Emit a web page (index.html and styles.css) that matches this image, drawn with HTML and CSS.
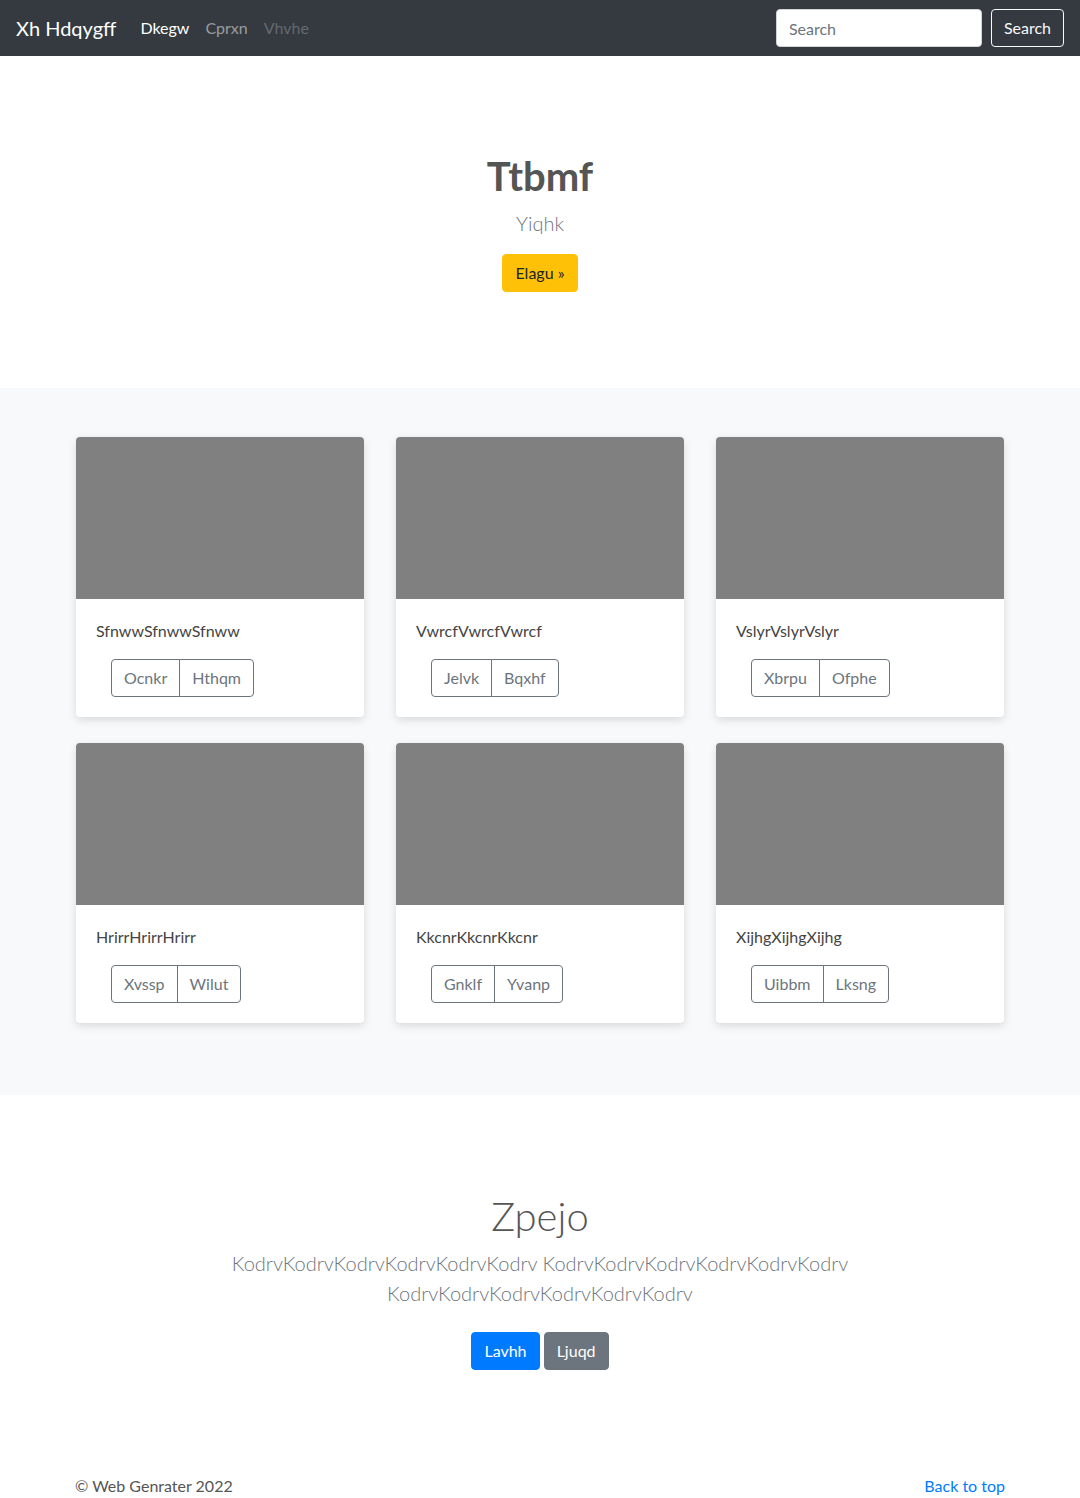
FILE: index.html
```html
<!DOCTYPE html>
<html lang="en">
<head>
<meta charset="utf-8">
<title>Xh Hdqygff</title>
<link rel="stylesheet" href="styles.css">
</head>
<body>
<header class="navbar">
  <div class="nav-left">
    <a class="brand" href="#">Xh Hdqygff</a>
    <nav class="nav-links">
      <a class="nav-link active" href="#">Dkegw</a>
      <a class="nav-link" href="#">Cprxn</a>
      <a class="nav-link disabled" href="#">Vhvhe</a>
    </nav>
  </div>
  <form class="search-form">
    <input class="search-input" type="text" placeholder="Search">
    <button class="btn btn-outline-light" type="button">Search</button>
  </form>
</header>

<section class="hero">
  <h1 class="hero-title">Ttbmf</h1>
  <p class="lead muted">Yiqhk</p>
  <p class="hero-actions"><a class="btn btn-warning" href="#">Elagu »</a></p>
</section>

<section class="album">
  <div class="card-grid">
    <div class="card"><div class="card-img"></div><div class="card-body"><p class="card-text">SfnwwSfnwwSfnww</p><div class="btn-group"><button class="btn btn-outline-secondary">Ocnkr</button><button class="btn btn-outline-secondary">Hthqm</button></div></div></div>
    <div class="card"><div class="card-img"></div><div class="card-body"><p class="card-text">VwrcfVwrcfVwrcf</p><div class="btn-group"><button class="btn btn-outline-secondary">Jelvk</button><button class="btn btn-outline-secondary">Bqxhf</button></div></div></div>
    <div class="card"><div class="card-img"></div><div class="card-body"><p class="card-text">VslyrVslyrVslyr</p><div class="btn-group"><button class="btn btn-outline-secondary">Xbrpu</button><button class="btn btn-outline-secondary">Ofphe</button></div></div></div>
    <div class="card"><div class="card-img"></div><div class="card-body"><p class="card-text">HrirrHrirrHrirr</p><div class="btn-group"><button class="btn btn-outline-secondary">Xvssp</button><button class="btn btn-outline-secondary">Wilut</button></div></div></div>
    <div class="card"><div class="card-img"></div><div class="card-body"><p class="card-text">KkcnrKkcnrKkcnr</p><div class="btn-group"><button class="btn btn-outline-secondary">Gnklf</button><button class="btn btn-outline-secondary">Yvanp</button></div></div></div>
    <div class="card"><div class="card-img"></div><div class="card-body"><p class="card-text">XijhgXijhgXijhg</p><div class="btn-group"><button class="btn btn-outline-secondary">Uibbm</button><button class="btn btn-outline-secondary">Lksng</button></div></div></div>
  </div>
</section>

<section class="about">
  <h1 class="about-title">Zpejo</h1>
  <p class="lead muted about-text">KodrvKodrvKodrvKodrvKodrvKodrv KodrvKodrvKodrvKodrvKodrvKodrv KodrvKodrvKodrvKodrvKodrvKodrv</p>
  <p class="about-actions">
    <a class="btn btn-primary" href="#">Lavhh</a>
    <a class="btn btn-secondary" href="#">Ljuqd</a>
  </p>
</section>

<footer class="footer">
  <p class="copy">© Web Genrater 2022</p>
  <a class="to-top" href="#">Back to top</a>
</footer>
</body>
</html>
```

FILE: styles.css
```css
* { box-sizing: border-box; }
html, body { margin: 0; padding: 0; }
body {
  font-family: "Segoe UI", Lato, "Open Sans", sans-serif;
  font-size: 16px;
  line-height: 1.5;
  color: #212529;
  background: #fff;
}
a { text-decoration: none; }
p { margin: 0; }
h1 { margin: 0; }

.navbar {
  height: 56px;
  background: #343a40;
  display: flex;
  align-items: center;
  justify-content: space-between;
  padding: 0 16px;
}
.nav-left { display: flex; align-items: center; }
.brand {
  color: #fff;
  font-size: 20px;
  line-height: 30px;
  margin-right: 16px;
}
.nav-links { display: flex; }
.nav-link {
  padding: 8px;
  color: rgba(255,255,255,.5);
}
.nav-link.active { color: #fff; }
.nav-link.disabled { color: rgba(255,255,255,.25); }

.search-form { display: flex; align-items: center; gap: 9px; }
.search-input {
  width: 206px;
  height: 38px;
  border: 1px solid #ced4da;
  border-radius: 4px;
  padding: 6px 12px;
  font: inherit;
  color: #495057;
  background: #fff;
}
.search-input::placeholder { color: #6c757d; }

.btn {
  display: inline-block;
  font: inherit;
  font-size: 16px;
  line-height: 24px;
  padding: 6px 12px;
  border: 1px solid transparent;
  border-radius: 4px;
  background: transparent;
  cursor: pointer;
}
.btn-outline-light { border-color: #f8f9fa; color: #f8f9fa; }
.btn-warning { background: #ffc107; border-color: #ffc107; color: #212529; }
.btn-primary { background: #007bff; border-color: #007bff; color: #fff; }
.btn-secondary { background: #6c757d; border-color: #6c757d; color: #fff; }
.btn-outline-secondary { border-color: #6c757d; color: #6c757d; }

.muted { color: #6c757d; }
.lead { font-size: 20px; font-weight: 300; line-height: 30px; }

.hero {
  text-align: center;
  padding: 96px 0 80px;
}
.hero-title {
  font-size: 40px;
  line-height: 48px;
  font-weight: 700;
  color: #555;
  margin-bottom: 8px;
}
.hero-actions { margin-top: 16px; margin-bottom: 16px; }

.album {
  background: #f8f9fa;
  padding: 48px 0 72px;
}
.card-grid {
  width: 928px;
  margin: 0 auto;
  display: grid;
  grid-template-columns: repeat(3, 288px);
  column-gap: 32px;
  row-gap: 26px;
  padding-top: 1px;
}
.card {
  background: #fff;
  border-radius: 4px;
  overflow: hidden;
  box-shadow: 0 3px 8px rgba(0,0,0,.13);
}
.card-img { height: 162px; background: #808080; }
.card-body { padding: 20px; }
.card-text { color: #444; margin-bottom: 16px; }
.btn-group { display: inline-flex; margin-left: 15px; }
.btn-group .btn:first-child { border-top-right-radius: 0; border-bottom-right-radius: 0; }
.btn-group .btn:last-child { border-top-left-radius: 0; border-bottom-left-radius: 0; margin-left: -1px; }

.about {
  text-align: center;
  padding: 97px 0 32px;
}
.about-title {
  font-size: 40px;
  line-height: 48px;
  font-weight: 300;
  color: #555;
  margin-bottom: 8px;
}
.about-text { width: 640px; margin: 0 auto 16px; }
.about-actions { margin-bottom: 16px; }
.about-actions .btn { margin: 8px 0; }

.footer {
  display: flex;
  justify-content: space-between;
  width: 930px;
  margin: 0 auto;
  padding: 48px 0;
  color: #555;
  font-size: 16px;
}
.to-top { color: #007bff; }
```
